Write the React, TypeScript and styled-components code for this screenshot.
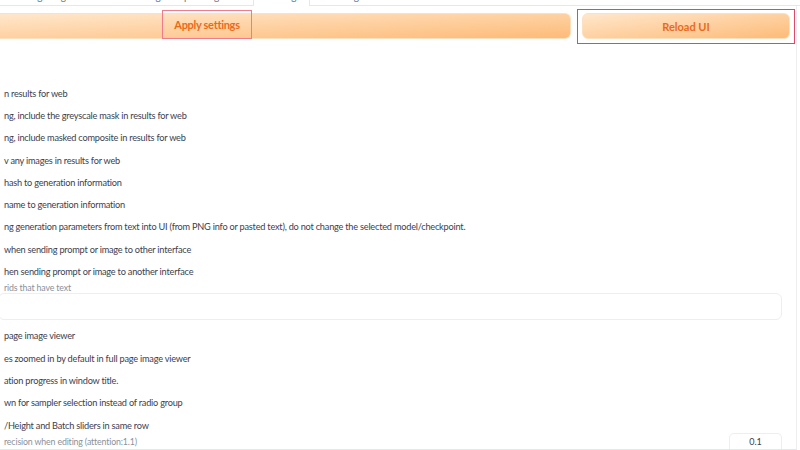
import styled, { createGlobalStyle } from "styled-components";

const GlobalStyle = createGlobalStyle`
  html, body { margin: 0; padding: 0; background: #ffffff; }
  body { font-family: Lato, "Noto Sans", sans-serif; }
`;

const Page = styled.div`
  width: 800px;
  height: 450px;
  overflow: hidden;
  box-sizing: border-box;
  display: flex;
  flex-direction: column;
`;

const TabNav = styled.div`
  flex: 0 0 6px;
  display: flex;
  height: 6px;
  overflow: hidden;
`;

const TabGroup = styled.div<{ $selected?: boolean; $width?: string }>`
  flex: ${(p) => (p.$width ? `0 0 ${p.$width}` : "1")};
  height: 6px;
  display: flex;
  align-items: flex-start;
  gap: 16px;
  padding: 0 0 0 ${(p) => (p.$selected ? "8px" : "14px")};
  box-sizing: border-box;
  overflow: hidden;
  white-space: nowrap;
  border-bottom: ${(p) => (p.$selected ? "none" : "1px solid #e5e7eb")};
  border-left: ${(p) => (p.$selected ? "1px solid #e5e7eb" : "none")};
  border-right: ${(p) => (p.$selected ? "1px solid #e5e7eb" : "none")};
`;

const TabLabel = styled.span`
  font-size: 10px;
  line-height: 10px;
  margin-top: -9px;
  color: #6b7280;
`;

const Panel = styled.div`
  flex: 1;
  display: flex;
  flex-direction: column;
  margin-right: 3px;
  border-right: 1px solid #eceef2;
  border-bottom: 1px solid #e5e7eb;
  overflow: hidden;
`;

const ButtonRow = styled.div`
  flex: 0 0 31px;
  display: flex;
  align-items: flex-start;
  margin-top: 7px;
`;

const ApplyBar = styled.div`
  flex: 0 0 571px;
  height: 26px;
  display: flex;
  align-items: flex-start;
  padding-left: 162px;
  box-sizing: border-box;
  border-radius: 0 6px 6px 0;
  background: linear-gradient(to bottom right, #ffe7cc, #fdbb78);
  border: 1px solid #fde0bf;
  border-left: none;
`;

const Highlight = styled.span`
  display: flex;
  align-items: center;
  justify-content: center;
  box-sizing: border-box;
  width: 90px;
  height: 29px;
  margin-top: -4px;
  border: 1.5px solid #ef7b8c;
  font-size: 11px;
  font-weight: 700;
  letter-spacing: -0.3px;
  color: #ea6a1c;
`;

const ReloadFrame = styled.div`
  margin-left: 6px;
  margin-top: -4px;
  width: 218px;
  height: 35px;
  box-sizing: border-box;
  border: 1.5px solid #e0486a;
  padding: 3px 4px;
`;

const ReloadButton = styled.button`
  width: 100%;
  height: 26px;
  border-radius: 6px;
  border: 1px solid #fde0bf;
  background: linear-gradient(to bottom right, #ffe7cc, #fdbb78);
  font-family: inherit;
  font-size: 11px;
  font-weight: 700;
  color: #ea6a1c;
  cursor: pointer;
`;

const SettingsList = styled.div`
  display: flex;
  flex-direction: column;
  margin-top: 38px;
  padding-left: 4px;
`;

const CheckRow = styled.div`
  flex: 0 0 22.3px;
  height: 22.3px;
  display: flex;
  align-items: center;
  font-size: 9.2px;
  letter-spacing: -0.22px;
  color: #3b4150;
  white-space: nowrap;
`;

const InfoLabel = styled.div`
  flex: 0 0 9px;
  height: 9px;
  display: flex;
  align-items: center;
  font-size: 8.8px;
  letter-spacing: -0.15px;
  color: #8b9099;
  white-space: nowrap;
`;

const TextBox = styled.div`
  flex: 0 0 27px;
  height: 27px;
  margin: 1px 14px 5px -6px;
  border: 1px solid #eceef2;
  border-radius: 6px;
  box-sizing: border-box;
`;

const SliderHead = styled.div`
  flex: 0 0 16px;
  display: flex;
  justify-content: space-between;
  align-items: center;
  margin-right: 14px;
  margin-top: -3px;
`;

const NumberInput = styled.div`
  width: 53px;
  height: 16px;
  box-sizing: border-box;
  border: 1px solid #eceef2;
  border-bottom: none;
  border-radius: 5px 5px 0 0;
  display: flex;
  align-items: center;
  justify-content: center;
  font-size: 9px;
  color: #374151;
`;

const firstRows = [
  "n results for web",
  "ng, include the greyscale mask in results for web",
  "ng, include masked composite in results for web",
  "v any images in results for web",
  "hash to generation information",
  "name to generation information",
  "ng generation parameters from text into UI (from PNG info or pasted text), do not change the selected model/checkpoint.",
  "when sending prompt or image to other interface",
  "hen sending prompt or image to another interface",
];

const secondRows = [
  "page image viewer",
  "es zoomed in by default in full page image viewer",
  "ation progress in window title.",
  "wn for sampler selection instead of radio group",
  "/Height and Batch sliders in same row",
];

export default function App() {
  return (
    <>
      <GlobalStyle />
      <Page>
        <TabNav>
          <TabGroup $width="253px">
            <TabLabel>Saving images</TabLabel>
            <TabLabel>Paths for saving</TabLabel>
            <TabLabel>Upscaling</TabLabel>
          </TabGroup>
          <TabGroup $selected $width="57px">
            <TabLabel>Training</TabLabel>
          </TabGroup>
          <TabGroup>
            <TabLabel>Interrogate</TabLabel>
          </TabGroup>
        </TabNav>
        <Panel>
          <ButtonRow>
            <ApplyBar>
              <Highlight>Apply settings</Highlight>
            </ApplyBar>
            <ReloadFrame>
              <ReloadButton>Reload UI</ReloadButton>
            </ReloadFrame>
          </ButtonRow>
          <SettingsList>
            {firstRows.map((t) => (
              <CheckRow key={t}>{t}</CheckRow>
            ))}
            <InfoLabel>rids that have text</InfoLabel>
            <TextBox />
            {secondRows.map((t) => (
              <CheckRow key={t}>{t}</CheckRow>
            ))}
            <SliderHead>
              <InfoLabel>recision when editing (attention:1.1)</InfoLabel>
              <NumberInput>0.1</NumberInput>
            </SliderHead>
          </SettingsList>
        </Panel>
      </Page>
    </>
  );
}
